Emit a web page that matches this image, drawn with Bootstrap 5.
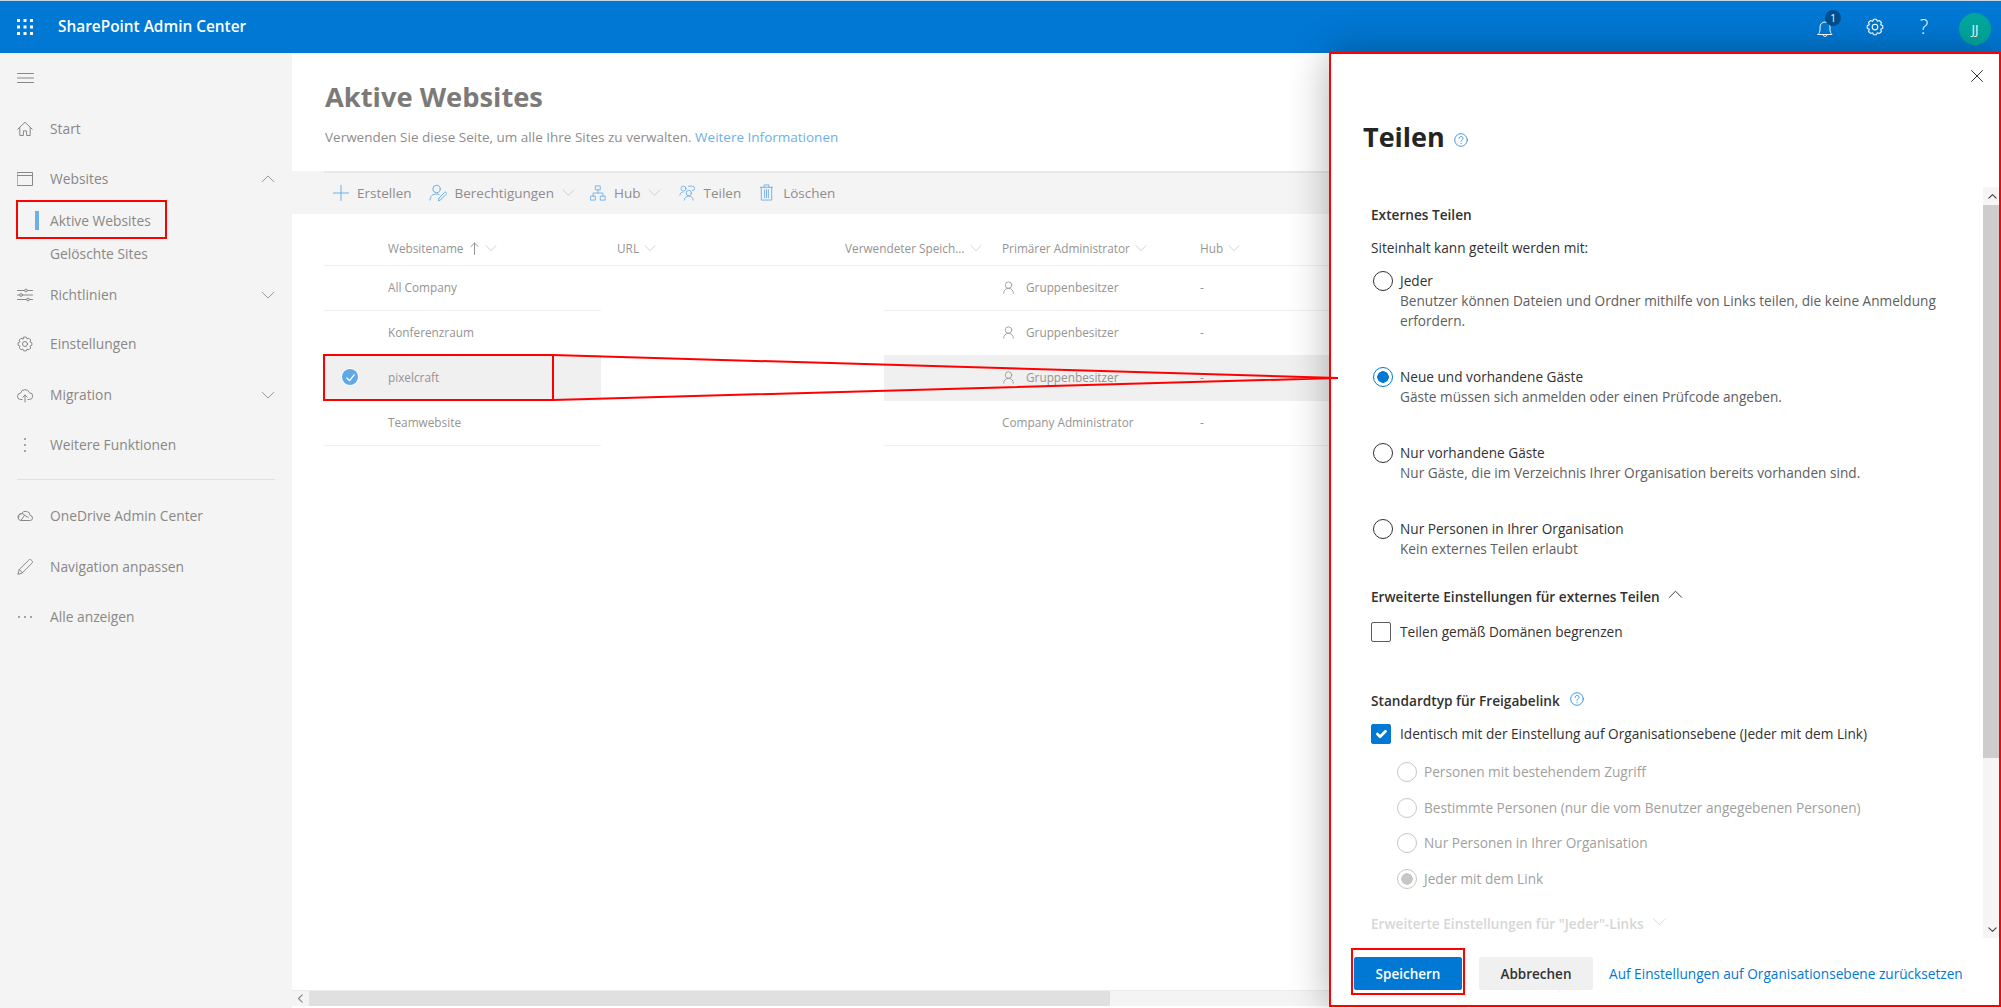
<!DOCTYPE html>
<html lang="de">
<head>
    <meta charset="UTF-8">
    <title>SharePoint Admin Center</title>
    <link href="https://cdn.jsdelivr.net/npm/bootstrap@5.3.0/dist/css/bootstrap.min.css" rel="stylesheet">
    <style>
        html, body { height: 100%; }
        body {
            font-family: "Open Sans", "Liberation Sans", sans-serif;
            font-size: 13.5px;
            line-height: 20px;
            overflow: hidden;
            position: relative;
            background: #f4f4f4;
        }
        svg.ico { fill: none; stroke: currentColor; stroke-width: 1; stroke-linecap: round; stroke-linejoin: round; flex: none; }

        /* top bar */
        .topbar { height: 53px; background: #0078d4; border-top: 1px solid #c9d6e2; color: #fff; padding-left: 17px; }
        .topbar-title { font-size: 15.4px; font-weight: 600; margin-left: 25px; }
        .bell-wrap { position: relative; width: 18px; height: 18px; }
        .bell-badge { position: absolute; left: 0; top: -8px; width: 16px; height: 16px; margin-left: 9px; border-radius: 50%; background: #004f8f; font-size: 10px; line-height: 16px; text-align: center; }
        .top-icons { gap: 32px; padding-right: 10px; }
        .help-mark { font-size: 20px; font-weight: 300; width: 14px; text-align: center; margin-left: 1px; }
        .avatar-jj { width: 32px; height: 32px; border-radius: 50%; background: #00a79d; font-size: 13px; line-height: 32px; text-align: center; margin-left: -4px; margin-top: 3px; }

        /* left nav */
        .sidenav { width: 292px; flex: none; background: #f4f4f4; color: #8a8886; padding-left: 17px; padding-top: 15px; font-size: 13.8px; }
        .nav-line { height: 50.3px; display: flex; align-items: center; gap: 17px; padding-right: 17px; }
        .nav-line .grow-txt { flex: 1; }
        .nav-sub { height: 33px; padding-left: 33px; display: flex; align-items: center; position: relative; }
        .nav-sub.on::before { content: ""; position: absolute; left: 18px; top: 7px; width: 4px; height: 19px; background: #6cb0e8; }
        .nav-sep { height: 1px; background: #e0e0e0; margin: 9px 17px 11px 0; }

        /* main */
        .main-area { flex: 1; min-width: 0; background: #fff; display: flex; flex-direction: column; position: relative; }
        .page-head { padding: 26px 0 0 33px; }
        .page-title { font-size: 27.3px; line-height: 36px; font-weight: 700; color: #7c7a78; margin: 0; }
        .page-sub { color: #8f8d8b; margin: 12px 0 24px; }
        .page-sub a { color: #6cb0e8; text-decoration: none; }
        .cmd-bar { height: 43px; background: #f4f4f4; padding-left: 41px; color: #8f8d8b; position: relative; }
        .cmd-bar::before { content: ""; position: absolute; left: 32px; right: 0; top: 0; height: 2px; background: #e8e8e8; }
        .cmd-blue { color: #6cb0e8; }
        .cmd-dim { color: #c4c4c4; }

        .site-list { margin-left: 32px; color: #969492; font-size: 11.8px; flex: 1; }
        .list-head { height: 52px; padding-top: 17px; border-bottom: 1px solid #f0f0f0; display: flex; align-items: center; }
        .site-row { height: 45px; padding-bottom: 2px; display: flex; align-items: center; border-bottom: 1px solid #f0f0f0; }
        .site-row.sel { background: #f0f0f0; border-bottom-color: #f0f0f0; }
        .col-check { width: 64px; flex: none; display: flex; padding-left: 18px; }
        .col-name { width: 213px; flex: none; }
        .col-url { width: 283px; flex: none; background: #fff; align-self: stretch; margin-bottom: -3px; }
        .col-used { width: 118px; flex: none; }
        .col-admin { width: 198px; flex: none; display: flex; align-items: center; gap: 11px; }
        .list-head > div { display: flex; align-items: center; gap: 5px; flex: none; }
        .head-name { width: 293px; padding-left: 64px; }
        .head-url { width: 228px; }
        .head-used { width: 157px; }
        .head-admin { width: 198px; }
        .pick-dot { width: 16px; height: 16px; border-radius: 50%; background: #5ea9e6; color: #fff; display: flex; align-items: center; justify-content: center; box-shadow: 0 0 0 1px #fff; }

        .hscroll { height: 16px; margin-bottom: 2px; background: #f4f4f4; display: flex; align-items: center; border-top: 1px solid #ececec; }
        .hscroll-arrow { width: 17px; text-align: center; color: #8a8886; display: flex; justify-content: center; }
        .hscroll-thumb { width: 801px; height: 100%; background: #e0e0e0; }

        /* side panel, sits over the page */
        .share-panel {
            position: absolute; top: 53px; right: 0; bottom: 0; width: 671px;
            background: #fff; color: #323130; font-size: 13.65px;
            box-shadow: 0 0 38px rgba(0, 0, 0, .32);
            display: flex; flex-direction: column;
        }
        .panel-head { height: 134px; flex: none; position: relative; padding: 64px 0 0 33px; }
        .panel-close { position: absolute; right: 18px; top: 17px; color: #323130; }
        .panel-title { font-size: 27px; line-height: 40px; font-weight: 700; color: #252423; margin: 0; }
        .panel-help { color: #2b88d8; margin-left: 9px; margin-top: 5px; }
        .panel-body { flex: 1; min-height: 0; display: flex; }
        .panel-scroll { flex: 1; padding: 18px 0 0 41px; overflow: hidden; }
        .vscroll { width: 18px; flex: none; background: #f5f5f5; display: flex; flex-direction: column; }
        .vscroll-btn { height: 18px; display: flex; align-items: center; justify-content: center; color: #444; }
        .vscroll-thumb { height: 553px; background: #cdcdcd; }
        .vscroll-rest { flex: 1; }
        .sect-title { font-weight: 600; color: #323130; }
        .plain-txt { margin-top: 13px; color: #323130; }
        .opt-row { display: flex; margin-top: 36px; padding-left: 2px; }
        .opt-row.first { margin-top: 13px; }
        .opt-row .form-check-input { margin: 0 7px 0 0; flex: none; }
        .opt-hint { color: #605e5c; width: 550px; }
        .share-panel .form-check-input[type=radio] { width: 20px; height: 20px; border: 1px solid #323130; }
        .share-panel .form-check-input[type=radio]:checked { background: radial-gradient(circle, #0078d4 5.5px, #fff 6px); border-color: #0078d4; }
        .share-panel .form-check-input[type=radio]:disabled { opacity: 1; border-color: #c8c6c4; }
        .share-panel .form-check-input[type=radio]:disabled:checked { background: radial-gradient(circle, #c8c6c4 5.5px, #fff 6px); }
        .chk-row { display: flex; align-items: center; }
        .chk-row .form-check-input { width: 20px; height: 20px; margin: 0 9px 0 0; border: 1px solid #605e5c; border-radius: 2px; flex: none; }
        .chk-row .form-check-input:checked { background-color: #0078d4; border-color: #0078d4; }
        .off-row { display: flex; margin-top: 15.5px; padding-left: 26px; color: #a19f9d; }
        .off-row .form-check-input { margin: 0 7px 0 0; flex: none; }
        .faded-title { font-weight: 600; color: #d6d6d6; margin-top: 25px; }
        .panel-foot { height: 70px; flex: none; padding: 19px 0 0 24px; display: flex; gap: 17px; }
        .btn-save, .btn-cancel { height: 33px; width: 108px; font-size: 13.5px; font-weight: 600; line-height: 20px; padding: 0; border-radius: 2px; }
        .btn-save { background: #0078d4; border-color: #0078d4; color: #fff; }
        .btn-cancel { width: 114px; background: #f0f0f0; border-color: #f0f0f0; color: #323130; }
        .reset-link { color: #0078d4; text-decoration: none; line-height: 33px; margin-left: -1px; }

        /* red callouts drawn on the screenshot */
        .callouts { position: absolute; left: 0; top: 0; pointer-events: none; }
    </style>
</head>
<body>
    <svg width="0" height="0" class="position-absolute">
        <defs>
            <symbol id="i-chev-d" viewBox="0 0 16 16"><path d="M1.5 5 8 11.5 14.5 5"/></symbol>
            <symbol id="i-chev-u" viewBox="0 0 16 16"><path d="M1.5 11 8 4.5 14.5 11"/></symbol>
            <symbol id="i-home" viewBox="0 0 16 16"><path d="M.8 8.2 8 1.2l7.2 7M2.8 6.5V14.5h3.6v-4.6h3.2v4.6h3.6V6.5"/></symbol>
            <symbol id="i-window" viewBox="0 0 16 16"><path d="M.5 1.5h15v13H.5zM.5 4.5h15"/></symbol>
            <symbol id="i-sliders" viewBox="0 0 16 16"><path d="M.5 3.5h7M10.5 3.5h5M.5 8h2M5.5 8h10M.5 12.5h9M12.5 12.5h3"/><circle cx="9" cy="3.5" r="1.4"/><circle cx="4" cy="8" r="1.4"/><circle cx="11" cy="12.5" r="1.4"/></symbol>
            <symbol id="i-gear" viewBox="0 0 16 16"><path d="M6.8 1.1h2.4l.9 1.8 1.9-.63 1.73 1.73-.65 1.9 1.82.9v2.4l-1.82.9.65 1.9-1.73 1.73-1.9-.65-.9 1.82H6.8l-.9-1.82-1.9.65-1.73-1.73.65-1.9-1.82-.9V6.800l1.82-.9-.65-1.9L4 2.270l1.900.65z"/><circle cx="8" cy="8" r="2.5"/></symbol>
            <symbol id="i-cloudup" viewBox="0 0 16 16"><path d="M5 12.500H3.800a3.200 3.200 0 0 1-.2-6.400 4.600 4.600 0 0 1 8.800-.4 3.400 3.400 0 0 1-.2 6.800H11M8 15V8M5.800 10.200 8 8l2.200 2.200"/></symbol>
            <symbol id="i-onedrive" viewBox="0 0 16 16"><path d="M3.500 12.500h9.300a2.500 2.500 0 0 0 .4-5A4.600 4.600 0 0 0 4.500 5.800 3.400 3.400 0 0 0 3.500 12.500zM1.600 9.500A3.200 3.200 0 0 1 7.500 7.200l3.800 2.300M4 12.500l3.500-5.300"/></symbol>
            <symbol id="i-pencil" viewBox="0 0 16 16"><path d="M1 15l1.200-4.400L11.800 1c.7-.7 1.700-.7 2.400 0l.8.8c.7.700.7 1.700 0 2.400L5.400 13.800zM2.200 10.600l3.200 3.200"/></symbol>
            <symbol id="i-plus" viewBox="0 0 16 16"><path d="M8 .5v15M.5 8h15"/></symbol>
            <symbol id="i-useredit" viewBox="0 0 18 18"><circle cx="7.500" cy="5" r="3.700"/><path d="M1 16c0-3.500 2.500-6 6.500-6 1 0 1.800.1 2.500.4M9.500 16.500l.6-2.600 5.400-5.400c.5-.5 1.300-.5 1.700 0s.5 1.200 0 1.700l-5.400 5.500z"/></symbol>
            <symbol id="i-hub" viewBox="0 0 18 18"><path d="M6.500 1h5v4.500h-5zM1 12.500h5V17H1zM12 12.500h5V17h-5zM9 5.500V9M3.500 12.500V9h11v3.500"/></symbol>
            <symbol id="i-people" viewBox="0 0 18 18"><circle cx="5" cy="4" r="2.800"/><path d="M1 11.500c0-1.800 1.200-3.500 3.600-3.500M10.500 1.300h4.500a2.600 2.600 0 0 1 0 5.200"/><circle cx="11" cy="9" r="3"/><path d="M6 17c0-2.500 2-4.500 5-4.500s5 2 5 4.500"/></symbol>
            <symbol id="i-trash" viewBox="0 0 18 18"><path d="M2.500 3.500h13M6.500 3.500V1h5v2.500M3.500 3.500V17h11V3.500M7 6v8.500M9 6v8.500M11 6v8.500"/></symbol>
            <symbol id="i-person" viewBox="0 0 16 16"><circle cx="8" cy="5" r="4"/><path d="M2 15c0-3.500 2.500-6 6-6s6 2.500 6 6"/></symbol>
            <symbol id="i-help" viewBox="0 0 16 16"><circle cx="8" cy="8" r="7.200"/><path d="M5.800 6.200c0-1.300 1-2.200 2.300-2.200s2.200.9 2.200 2c0 1.700-2.300 1.800-2.300 3.500M8 11.700v.3"/></symbol>
        </defs>
    </svg>

    <header class="topbar d-flex align-items-center">
        <svg width="16" height="16" viewBox="0 0 16 16" fill="#fff" style="flex:none">
            <rect x="0" y="0" width="3" height="3"/><rect x="6.500" y="0" width="3" height="3"/><rect x="13" y="0" width="3" height="3"/>
            <rect x="0" y="6.500" width="3" height="3"/><rect x="6.500" y="6.500" width="3" height="3"/><rect x="13" y="6.500" width="3" height="3"/>
            <rect x="0" y="13" width="3" height="3"/><rect x="6.500" y="13" width="3" height="3"/><rect x="13" y="13" width="3" height="3"/>
        </svg>
        <span class="topbar-title">SharePoint Admin Center</span>
        <div class="ms-auto d-flex align-items-center top-icons">
            <div class="bell-wrap">
                <svg class="ico" width="18" height="18" viewBox="0 0 18 18"><path d="M2 14.500h14c-1.500-1.500-2-2.500-2-5.500V7a5 5 0 0 0-10 0v2c0 3-.5 4-2 5.500zM7 14.500a2 2 0 0 0 4 0"/></svg>
                <div class="bell-badge">1</div>
            </div>
            <svg class="ico" width="18" height="18" viewBox="0 0 16 16"><use href="#i-gear"/></svg>
            <span class="help-mark">?</span>
            <div class="avatar-jj">JJ</div>
        </div>
    </header>

    <div class="d-flex" style="height:955px">
        <nav class="sidenav">
            <div class="nav-line" style="height:20px;margin-bottom:16px">
                <svg class="ico" width="17" height="10" viewBox="0 0 17 10"><path d="M.5 .5h16M.5 5h16M.5 9.500h16"/></svg>
            </div>
            <div class="nav-line"><svg class="ico" width="16" height="16"><use href="#i-home"/></svg><span class="grow-txt">Start</span></div>
            <div class="nav-line" style="height:50px"><svg class="ico" width="16" height="16"><use href="#i-window"/></svg><span class="grow-txt">Websites</span><svg class="ico" width="14" height="14"><use href="#i-chev-u"/></svg></div>
            <div class="nav-sub on">Aktive Websites</div>
            <div class="nav-sub">Gelöschte Sites</div>
            <div class="nav-line" style="height:49px"><svg class="ico" width="16" height="16"><use href="#i-sliders"/></svg><span class="grow-txt">Richtlinien</span><svg class="ico" width="14" height="14"><use href="#i-chev-d"/></svg></div>
            <div class="nav-line"><svg class="ico" width="16" height="16"><use href="#i-gear"/></svg><span class="grow-txt">Einstellungen</span></div>
            <div class="nav-line"><svg class="ico" width="16" height="16"><use href="#i-cloudup"/></svg><span class="grow-txt">Migration</span><svg class="ico" width="14" height="14"><use href="#i-chev-d"/></svg></div>
            <div class="nav-line">
                <svg width="16" height="16" viewBox="0 0 16 16" fill="currentColor" style="flex:none"><circle cx="8" cy="2" r="1"/><circle cx="8" cy="8" r="1"/><circle cx="8" cy="14" r="1"/></svg>
                <span class="grow-txt">Weitere Funktionen</span>
            </div>
            <div class="nav-sep"></div>
            <div class="nav-line"><svg class="ico" width="16" height="16"><use href="#i-onedrive"/></svg><span class="grow-txt">OneDrive Admin Center</span></div>
            <div class="nav-line"><svg class="ico" width="16" height="16"><use href="#i-pencil"/></svg><span class="grow-txt">Navigation anpassen</span></div>
            <div class="nav-line">
                <svg width="16" height="16" viewBox="0 0 16 16" fill="currentColor" style="flex:none"><circle cx="2" cy="8" r="1"/><circle cx="8" cy="8" r="1"/><circle cx="14" cy="8" r="1"/></svg>
                <span class="grow-txt">Alle anzeigen</span>
            </div>
        </nav>

        <main class="main-area">
            <div class="page-head">
                <h1 class="page-title">Aktive Websites</h1>
                <p class="page-sub">Verwenden Sie diese Seite, um alle Ihre Sites zu verwalten. <a href="#">Weitere Informationen</a></p>
            </div>
            <div class="cmd-bar d-flex align-items-center">
                <svg class="ico cmd-blue me-2" width="16" height="16"><use href="#i-plus"/></svg><span style="margin-right:17px">Erstellen</span>
                <svg class="ico cmd-blue me-2" width="18" height="18"><use href="#i-useredit"/></svg><span class="me-2">Berechtigungen</span>
                <svg class="ico cmd-dim" width="13" height="13" style="margin-right:15px"><use href="#i-chev-d"/></svg>
                <svg class="ico cmd-blue me-2" width="16" height="16"><use href="#i-hub"/></svg><span class="me-2">Hub</span>
                <svg class="ico cmd-dim" width="13" height="13" style="margin-right:18px"><use href="#i-chev-d"/></svg>
                <svg class="ico cmd-blue me-2" width="16" height="16"><use href="#i-people"/></svg><span style="margin-right:17px">Teilen</span>
                <svg class="ico cmd-blue me-2" width="17" height="17"><use href="#i-trash"/></svg><span>Löschen</span>
            </div>
            <div class="site-list">
                <div class="list-head">
                    <div class="head-name">Websitename <svg class="ico" width="11" height="13" viewBox="0 0 11 13"><path d="M5.500 12.500V1M2 4.500 5.500 1 9 4.500"/></svg><svg class="ico cmd-dim" width="12" height="12"><use href="#i-chev-d"/></svg></div>
                    <div class="head-url">URL <svg class="ico cmd-dim" width="12" height="12"><use href="#i-chev-d"/></svg></div>
                    <div class="head-used">Verwendeter Speich... <svg class="ico cmd-dim" width="12" height="12"><use href="#i-chev-d"/></svg></div>
                    <div class="head-admin">Primärer Administrator <svg class="ico cmd-dim" width="12" height="12"><use href="#i-chev-d"/></svg></div>
                    <div>Hub <svg class="ico cmd-dim" width="12" height="12"><use href="#i-chev-d"/></svg></div>
                </div>
                <div class="site-row">
                    <div class="col-check"></div><div class="col-name">All Company</div><div class="col-url"></div><div class="col-used"></div>
                    <div class="col-admin"><svg class="ico" width="13" height="13"><use href="#i-person"/></svg>Gruppenbesitzer</div><div>-</div>
                </div>
                <div class="site-row">
                    <div class="col-check"></div><div class="col-name">Konferenzraum</div><div class="col-url"></div><div class="col-used"></div>
                    <div class="col-admin"><svg class="ico" width="13" height="13"><use href="#i-person"/></svg>Gruppenbesitzer</div><div>-</div>
                </div>
                <div class="site-row sel">
                    <div class="col-check"><span class="pick-dot"><svg class="ico" width="9" height="9" viewBox="0 0 10 10" style="stroke-width:1.500"><path d="M1 5.500 4 8.500 9 2"/></svg></span></div>
                    <div class="col-name">pixelcraft</div><div class="col-url"></div><div class="col-used"></div>
                    <div class="col-admin"><svg class="ico" width="13" height="13"><use href="#i-person"/></svg>Gruppenbesitzer</div><div>-</div>
                </div>
                <div class="site-row">
                    <div class="col-check"></div><div class="col-name">Teamwebsite</div><div class="col-url"></div><div class="col-used"></div>
                    <div class="col-admin">Company Administrator</div><div>-</div>
                </div>
            </div>
            <div class="hscroll">
                <div class="hscroll-arrow"><svg class="ico" width="9" height="9" style="stroke-width:2"><use href="#i-chev-d" transform="rotate(90 4.500 4.500)"/></svg></div>
                <div class="hscroll-thumb"></div>
            </div>
        </main>
    </div>

    <aside class="share-panel">
        <div class="panel-head">
            <svg class="ico panel-close" width="12" height="12" viewBox="0 0 12 12"><path d="M.5 .5l11 11M11.500 .5l-11 11"/></svg>
            <div class="d-flex align-items-center">
                <h2 class="panel-title">Teilen</h2>
                <svg class="ico panel-help" width="14" height="14"><use href="#i-help"/></svg>
            </div>
        </div>
        <div class="panel-body">
            <div class="panel-scroll">
                <div class="sect-title">Externes Teilen</div>
                <div class="plain-txt">Siteinhalt kann geteilt werden mit:</div>
                <div class="opt-row first">
                    <input class="form-check-input" type="radio" name="share">
                    <div>Jeder<div class="opt-hint">Benutzer können Dateien und Ordner mithilfe von Links teilen, die keine Anmeldung erfordern.</div></div>
                </div>
                <div class="opt-row">
                    <input class="form-check-input" type="radio" name="share" checked>
                    <div>Neue und vorhandene Gäste<div class="opt-hint">Gäste müssen sich anmelden oder einen Prüfcode angeben.</div></div>
                </div>
                <div class="opt-row">
                    <input class="form-check-input" type="radio" name="share">
                    <div>Nur vorhandene Gäste<div class="opt-hint">Nur Gäste, die im Verzeichnis Ihrer Organisation bereits vorhanden sind.</div></div>
                </div>
                <div class="opt-row">
                    <input class="form-check-input" type="radio" name="share">
                    <div>Nur Personen in Ihrer Organisation<div class="opt-hint">Kein externes Teilen erlaubt</div></div>
                </div>
                <div class="sect-title d-flex align-items-center gap-2" style="margin-top:28px">Erweiterte Einstellungen für externes Teilen <svg class="ico" width="15" height="15" style="margin-top:-5px"><use href="#i-chev-u"/></svg></div>
                <div class="chk-row" style="margin-top:15px"><input class="form-check-input" type="checkbox"><span>Teilen gemäß Domänen begrenzen</span></div>
                <div class="sect-title d-flex align-items-center" style="margin-top:49px;gap:10px">Standardtyp für Freigabelink <svg class="ico" width="14" height="14" style="color:#2b88d8;margin-top:-4px"><use href="#i-help"/></svg></div>
                <div class="chk-row" style="margin-top:13px"><input class="form-check-input" type="checkbox" checked><span>Identisch mit der Einstellung auf Organisationsebene (Jeder mit dem Link)</span></div>
                <div class="off-row" style="margin-top:18px"><input class="form-check-input" type="radio" name="linktype" disabled>Personen mit bestehendem Zugriff</div>
                <div class="off-row"><input class="form-check-input" type="radio" name="linktype" disabled>Bestimmte Personen (nur die vom Benutzer angegebenen Personen)</div>
                <div class="off-row"><input class="form-check-input" type="radio" name="linktype" disabled>Nur Personen in Ihrer Organisation</div>
                <div class="off-row"><input class="form-check-input" type="radio" name="linktype" disabled checked>Jeder mit dem Link</div>
                <div class="faded-title d-flex align-items-center gap-2">Erweiterte Einstellungen für "Jeder"-Links <svg class="ico" width="15" height="15" style="margin-top:-5px"><use href="#i-chev-d"/></svg></div>
            </div>
            <div class="vscroll">
                <div class="vscroll-btn"><svg class="ico" width="9" height="9" style="stroke-width:2"><use href="#i-chev-u"/></svg></div>
                <div class="vscroll-thumb"></div>
                <div class="vscroll-rest"></div>
                <div class="vscroll-btn"><svg class="ico" width="9" height="9" style="stroke-width:2"><use href="#i-chev-d"/></svg></div>
            </div>
        </div>
        <div class="panel-foot">
            <button type="button" class="btn btn-save">Speichern</button>
            <button type="button" class="btn btn-cancel">Abbrechen</button>
            <a href="#" class="reset-link">Auf Einstellungen auf Organisationsebene zurücksetzen</a>
        </div>
    </aside>

    <svg class="callouts" width="2001" height="1008" fill="none" stroke="#f00" stroke-width="2">
        <rect x="17" y="201" width="149" height="37"/>
        <rect x="324" y="355" width="229" height="45"/>
        <path d="M553 355 1338 378M553 400 1338 378"/>
        <rect x="1330" y="53" width="670" height="953"/>
        <rect x="1352" y="949" width="112" height="45"/>
    </svg>
</body>
</html>
